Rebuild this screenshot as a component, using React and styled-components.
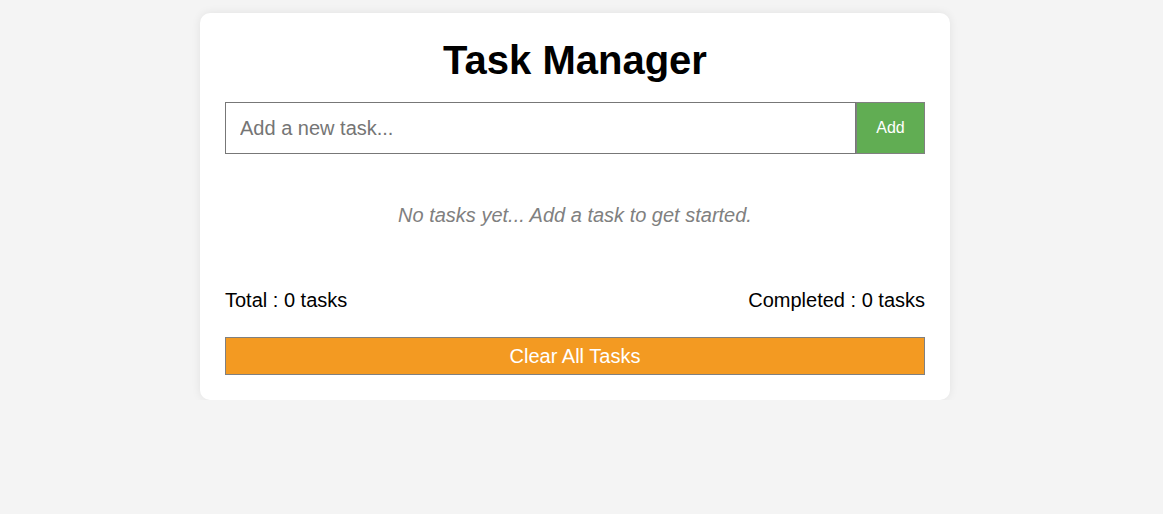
import React, { useState } from "react";
import styled, { createGlobalStyle } from "styled-components";

const Global = createGlobalStyle`
  html, body { margin: 0; padding: 0; background: #f4f4f4; }
  body { font-family: "Liberation Sans", Arial, sans-serif; }
  * { box-sizing: border-box; }
`;

const Page = styled.div`
  display: flex;
  justify-content: center;
  padding-top: 13px;
  padding-right: 13px;
`;

const Card = styled.div`
  width: 750px;
  background: #fff;
  border-radius: 10px;
  box-shadow: 0 0 10px rgba(0, 0, 0, 0.08);
  padding: 24px 25px 25px;
`;

const Title = styled.h1`
  margin: 0 0 19px;
  font-size: 40px;
  line-height: 46px;
  font-weight: bold;
  text-align: center;
  color: #000;
`;

const InputRow = styled.div`
  display: flex;
  height: 52px;
`;

const TaskInput = styled.input`
  flex: 1;
  height: 100%;
  border: 1px solid #777;
  padding: 0 14px;
  font-size: 20px;
  font-family: "Liberation Sans", Arial, sans-serif;
  color: #000;
  outline: none;
  &::placeholder { color: #757575; }
`;

const AddButton = styled.button`
  width: 69px;
  height: 100%;
  background: #61ad53;
  color: #fff;
  border: 1px solid #808080;
  font-size: 16px;
  font-family: "Liberation Sans", Arial, sans-serif;
  cursor: pointer;
`;

const Empty = styled.p`
  margin: 0;
  padding: 50px 0 62px;
  text-align: center;
  font-style: italic;
  font-size: 20px;
  line-height: 23px;
  color: #808080;
`;

const Stats = styled.div`
  display: flex;
  justify-content: space-between;
  font-size: 20px;
  line-height: 23px;
  color: #000;
`;

const ClearButton = styled.button`
  display: block;
  width: 100%;
  height: 38px;
  margin-top: 25px;
  background: #f39a22;
  color: #fff;
  border: 1px solid #808080;
  font-size: 20px;
  font-family: "Liberation Sans", Arial, sans-serif;
  cursor: pointer;
`;

export default function App() {
  const [text, setText] = useState("");
  return (
    <>
      <Global />
      <Page>
        <Card>
          <Title>Task Manager</Title>
          <InputRow>
            <TaskInput
              placeholder="Add a new task..."
              value={text}
              onChange={(e) => setText(e.target.value)}
            />
            <AddButton>Add</AddButton>
          </InputRow>
          <Empty>No tasks yet... Add a task to get started.</Empty>
          <Stats>
            <span>Total : 0 tasks</span>
            <span>Completed : 0 tasks</span>
          </Stats>
          <ClearButton>Clear All Tasks</ClearButton>
        </Card>
      </Page>
    </>
  );
}
